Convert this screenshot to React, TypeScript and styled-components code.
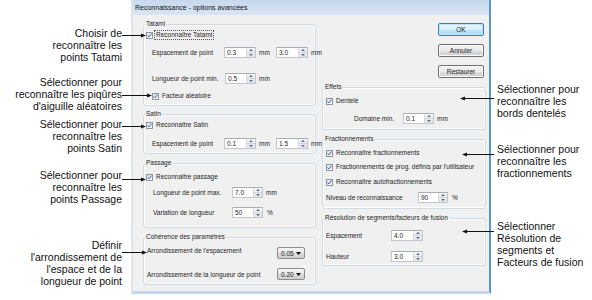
import React from "react";
import styled, { createGlobalStyle } from "styled-components";

const GlobalStyle = createGlobalStyle`
  body {
    margin: 0;
    background: #fff;
  }
`;

const Page = styled.div`
  position: relative;
  width: 592px;
  height: 300px;
  overflow: hidden;
  font-family: "Liberation Sans", Arial, sans-serif;
`;

const Dialog = styled.div`
  margin-left: 131px;
  width: 360px;
  height: 294px;
  box-sizing: border-box;
  display: flex;
  flex-direction: column;
  background: #f0f0f0;
  border-left: 2px solid #dbe6f2;
  border-right: 2px solid #5a97ca;
  border-bottom: 3px solid #c4d7ec;
  font-size: 6.5px;
  color: #1c1c1c;
`;

const TitleBar = styled.div`
  height: 15px;
  line-height: 15px;
  padding-left: 2px;
  font-size: 7px;
  color: #111;
  background: linear-gradient(#c6d8ed, #d9e5f3);
`;

const Body = styled.div`
  flex: 1;
  display: flex;
  padding: 5px 0 0 10px;
`;

const Column = styled.div<{ $w: number; $ml?: number }>`
  width: ${(p) => p.$w}px;
  margin-left: ${(p) => p.$ml ?? 0}px;
  display: flex;
  flex-direction: column;
`;

const Group = styled.fieldset<{ $mt?: number; $pb: number }>`
  margin: ${(p) => p.$mt ?? 0}px 0 0 0;
  padding: 0 0 ${(p) => p.$pb}px 0;
  min-width: 0;
  border: 1px solid #d2dbe2;
  border-radius: 3px;
  box-shadow: inset 0 0 0 1px #f9fbfc;
`;

const Legend = styled.legend`
  margin-left: 1px;
  padding: 0 1px;
  line-height: 8px;
  font-size: 6.5px;
`;

const Row = styled.div<{ $mt?: number; $pl: number; $pr?: number; $spread?: boolean }>`
  height: 14px;
  margin-top: ${(p) => p.$mt ?? 0}px;
  padding-left: ${(p) => p.$pl}px;
  padding-right: ${(p) => p.$pr ?? 0}px;
  display: flex;
  align-items: center;
  justify-content: ${(p) => (p.$spread ? "space-between" : "flex-start")};
  white-space: nowrap;
`;

const Label = styled.span<{ $w?: number }>`
  width: ${(p) => (p.$w ? `${p.$w}px` : "auto")};
  flex: none;
`;

const Unit = styled.span<{ $ml?: number; $w?: number }>`
  margin-left: ${(p) => p.$ml ?? 3}px;
  width: ${(p) => (p.$w ? `${p.$w}px` : "auto")};
  flex: none;
`;

const CheckBox = styled.span`
  width: 7px;
  height: 7px;
  box-sizing: border-box;
  border: 1px solid #8f969c;
  background: linear-gradient(#dfe3e7, #fbfbfb);
  display: inline-flex;
  align-items: center;
  justify-content: center;
  flex: none;
`;

const CheckText = styled.span<{ $focus?: boolean }>`
  margin-left: 2px;
  padding: 0 1px;
  line-height: 8px;
  outline: ${(p) => (p.$focus ? "1px dotted #555" : "none")};
`;

const SpinBox = styled.span<{ $w: number }>`
  width: ${(p) => p.$w}px;
  height: 11px;
  box-sizing: border-box;
  display: inline-flex;
  background: #fff;
  border: 1px solid #c3c7cd;
  border-top-color: #a9adb3;
  flex: none;
`;

const SpinValue = styled.span`
  flex: 1;
  padding-left: 2px;
  line-height: 9px;
`;

const SpinButtons = styled.span`
  width: 8px;
  display: flex;
  flex-direction: column;
  border-left: 1px solid #d6d9dd;
  background: linear-gradient(#f5f6f7, #e1e4e8);
`;

const SpinHalf = styled.span`
  flex: 1;
  display: flex;
  align-items: center;
  justify-content: center;

  & + & {
    border-top: 1px solid #d0d4d9;
  }
`;

const Drop = styled.span<{ $mt?: number }>`
  width: 28px;
  height: 12px;
  margin-top: ${(p) => p.$mt ?? 0}px;
  box-sizing: border-box;
  border: 1px solid #8b8b8b;
  border-radius: 2px;
  background: linear-gradient(#f6f6f6, #e8e8e8 50%, #d9d9d9 51%, #d0d0d0);
  display: flex;
  align-items: center;
  justify-content: space-between;
  padding: 0 3px 0 3px;
  flex: none;
`;

const Buttons = styled.div`
  margin-top: 3px;
  padding-right: 2px;
  display: flex;
  flex-direction: column;
  align-items: flex-end;
  gap: 8px;
`;

const Button = styled.button<{ $default?: boolean }>`
  width: 46px;
  height: 13px;
  padding: 0;
  font-family: inherit;
  font-size: 6.5px;
  color: #1c1c1c;
  border: 1px solid ${(p) => (p.$default ? "#3c7fb1" : "#707070")};
  border-radius: 2px;
  background: ${(p) =>
    p.$default
      ? "linear-gradient(#eaf6fd 0%, #d9f0fc 50%, #bee6fd 51%, #a7d9f5 100%)"
      : "linear-gradient(#f2f2f2 0%, #ebebeb 50%, #dddddd 51%, #cfcfcf 100%)"};
  box-shadow: inset 0 0 0 1px ${(p) => (p.$default ? "#bfe4f8" : "#fbfbfb")};
`;

const Note = styled.div<{ $side: "left" | "right"; $top: number }>`
  position: absolute;
  top: ${(p) => p.$top}px;
  ${(p) => (p.$side === "left" ? "right: 470px; text-align: right;" : "left: 497px;")}
  font-size: 10.5px;
  line-height: 12px;
  color: #111;
  white-space: nowrap;
`;

const Arrows = styled.svg`
  position: absolute;
  left: 0;
  top: 0;
  pointer-events: none;
`;

const Check = ({ label, focus }: { label: string; focus?: boolean }) => (
  <>
    <CheckBox>
      <svg width="5" height="5" viewBox="0 0 5 5">
        <path d="M0.6 2.6 L1.8 4 L4.4 0.7" stroke="#2d62ad" strokeWidth="1" fill="none" />
      </svg>
    </CheckBox>
    <CheckText $focus={focus}>{label}</CheckText>
  </>
);

const Spin = ({ value, w = 31 }: { value: string; w?: number }) => (
  <SpinBox $w={w}>
    <SpinValue>{value}</SpinValue>
    <SpinButtons>
      <SpinHalf>
        <svg width="4" height="2" viewBox="0 0 4 2">
          <path d="M0 2 L2 0 L4 2z" fill="#5b6b86" />
        </svg>
      </SpinHalf>
      <SpinHalf>
        <svg width="4" height="2" viewBox="0 0 4 2">
          <path d="M0 0 L4 0 L2 2z" fill="#5b6b86" />
        </svg>
      </SpinHalf>
    </SpinButtons>
  </SpinBox>
);

const Select = ({ value, mt }: { value: string; mt?: number }) => (
  <Drop $mt={mt}>
    <span>{value}</span>
    <svg width="5" height="3" viewBox="0 0 5 3">
      <path d="M0 0 L5 0 L2.5 3z" fill="#111" />
    </svg>
  </Drop>
);

const notes: { side: "left" | "right"; top: number; lines: string[] }[] = [
  { side: "left", top: 27, lines: ["Choisir de", "reconnaître les", "points Tatami"] },
  { side: "left", top: 76, lines: ["Sélectionner pour", "reconnaître les piqûres", "d'aiguille aléatoires"] },
  { side: "left", top: 118, lines: ["Sélectionner pour", "reconnaître les", "points Satin"] },
  { side: "left", top: 169, lines: ["Sélectionner pour", "reconnaître les", "points Passage"] },
  { side: "left", top: 239, lines: ["Définir", "l'arrondissement de", "l'espace et de la", "longueur de point"] },
  { side: "right", top: 83, lines: ["Sélectionner pour", "reconnaître les", "bords dentelés"] },
  { side: "right", top: 143, lines: ["Sélectionner pour", "reconnaître les", "fractionnements"] },
  { side: "right", top: 220, lines: ["Sélectionner", "Résolution de", "segments et", "Facteurs de fusion"] },
];

const pointers = [
  { y: 35, from: 122, to: 146 },
  { y: 95, from: 122, to: 152 },
  { y: 126, from: 122, to: 146 },
  { y: 179, from: 122, to: 146 },
  { y: 252, from: 122, to: 147 },
  { y: 98, from: 494, to: 460 },
  { y: 154, from: 494, to: 462 },
  { y: 231, from: 494, to: 462 },
];

const App = () => {
  return (
    <>
      <GlobalStyle />
      <Page>
        <Dialog>
          <TitleBar>Reconnaissance - options avancées</TitleBar>
          <Body>
            <Column $w={173}>
              <Group $pb={2}>
                <Legend>Tatami</Legend>
                <Row $pl={2}>
                  <Check label="Reconnaître Tatami" focus />
                </Row>
                <Row $mt={3} $pl={8}>
                  <Label $w={72}>Espacement de point</Label>
                  <Spin value="0.3" w={32} />
                  <Unit $w={17}>mm</Unit>
                  <Spin value="3.0" w={32} />
                  <Unit>mm</Unit>
                </Row>
                <Row $mt={12} $pl={8}>
                  <Label $w={73}>Longueur de point min.</Label>
                  <Spin value="0.5" />
                  <Unit>mm</Unit>
                </Row>
                <Row $mt={4} $pl={8}>
                  <Check label="Facteur aléatoire" />
                </Row>
              </Group>

              <Group $mt={4} $pb={3}>
                <Legend>Satin</Legend>
                <Row $pl={2}>
                  <Check label="Reconnaître Satin" />
                </Row>
                <Row $mt={4} $pl={8}>
                  <Label $w={72}>Espacement de point</Label>
                  <Spin value="0.1" w={32} />
                  <Unit $w={17}>mm</Unit>
                  <Spin value="1.5" w={32} />
                  <Unit>mm</Unit>
                </Row>
              </Group>

              <Group $mt={5} $pb={8}>
                <Legend>Passage</Legend>
                <Row $mt={3} $pl={2}>
                  <Check label="Reconnaître passage" />
                </Row>
                <Row $mt={1} $pl={9}>
                  <Label $w={79}>Longueur de point max.</Label>
                  <Spin value="7.0" />
                  <Unit>mm</Unit>
                </Row>
                <Row $mt={6} $pl={9}>
                  <Label $w={79}>Variation de longueur</Label>
                  <Spin value="50" />
                  <Unit $ml={4}>%</Unit>
                </Row>
              </Group>

              <Group $mt={5} $pb={3}>
                <Legend>Cohérence des paramètres</Legend>
                <Row $mt={2} $pl={3} $pr={10} $spread>
                  <Label>Arrondissement de l'espacement</Label>
                  <Select value="0.05" mt={6} />
                </Row>
                <Row $mt={10} $pl={3} $pr={10} $spread>
                  <Label>Arrondissement de la longueur de point</Label>
                  <Select value="0.20" />
                </Row>
              </Group>
            </Column>

            <Column $w={164} $ml={6}>
              <Buttons>
                <Button $default>OK</Button>
                <Button>Annuler</Button>
                <Button>Restaurer</Button>
              </Buttons>

              <Group $mt={5} $pb={4}>
                <Legend>Effets</Legend>
                <Row $mt={3} $pl={3}>
                  <Check label="Dentelé" />
                </Row>
                <Row $mt={3} $pl={31}>
                  <Label $w={49}>Domaine min.</Label>
                  <Spin value="0.1" />
                  <Unit>mm</Unit>
                </Row>
              </Group>

              <Group $mt={5} $pb={4}>
                <Legend>Fractionnements</Legend>
                <Row $mt={3} $pl={3}>
                  <Check label="Reconnaître fractionnements" />
                </Row>
                <Row $pl={3}>
                  <Check label="Fractionnements de prog. définis par l'utilisateur" />
                </Row>
                <Row $mt={1} $pl={3}>
                  <Check label="Reconnaître autofractionnements" />
                </Row>
                <Row $mt={1} $pl={3}>
                  <Label $w={92}>Niveau de reconnaissance</Label>
                  <Spin value="90" w={30} />
                  <Unit $ml={4}>%</Unit>
                </Row>
              </Group>

              <Group $mt={5} $pb={2}>
                <Legend>Résolution de segments/facteurs de fusion</Legend>
                <Row $mt={6} $pl={3}>
                  <Label $w={65}>Espacement</Label>
                  <Spin value="4.0" w={32} />
                </Row>
                <Row $mt={7} $pl={3}>
                  <Label $w={65}>Hauteur</Label>
                  <Spin value="3.0" w={32} />
                </Row>
              </Group>
            </Column>
          </Body>
        </Dialog>

        {notes.map((n, i) => (
          <Note key={i} $side={n.side} $top={n.top}>
            {n.lines.map((line, j) => (
              <div key={j}>{line}</div>
            ))}
          </Note>
        ))}

        <Arrows width="592" height="300" viewBox="0 0 592 300">
          {pointers.map((a, i) => {
            const dir = a.to > a.from ? 1 : -1;
            const y = a.y + 0.5;
            return (
              <g key={i}>
                <line x1={a.from} y1={y} x2={a.to - dir * 3} y2={y} stroke="#111" strokeWidth="1" />
                <polygon
                  points={`${a.to},${y} ${a.to - dir * 5},${y - 2} ${a.to - dir * 5},${y + 2}`}
                  fill="#111"
                />
              </g>
            );
          })}
        </Arrows>
      </Page>
    </>
  );
};

export default App;
